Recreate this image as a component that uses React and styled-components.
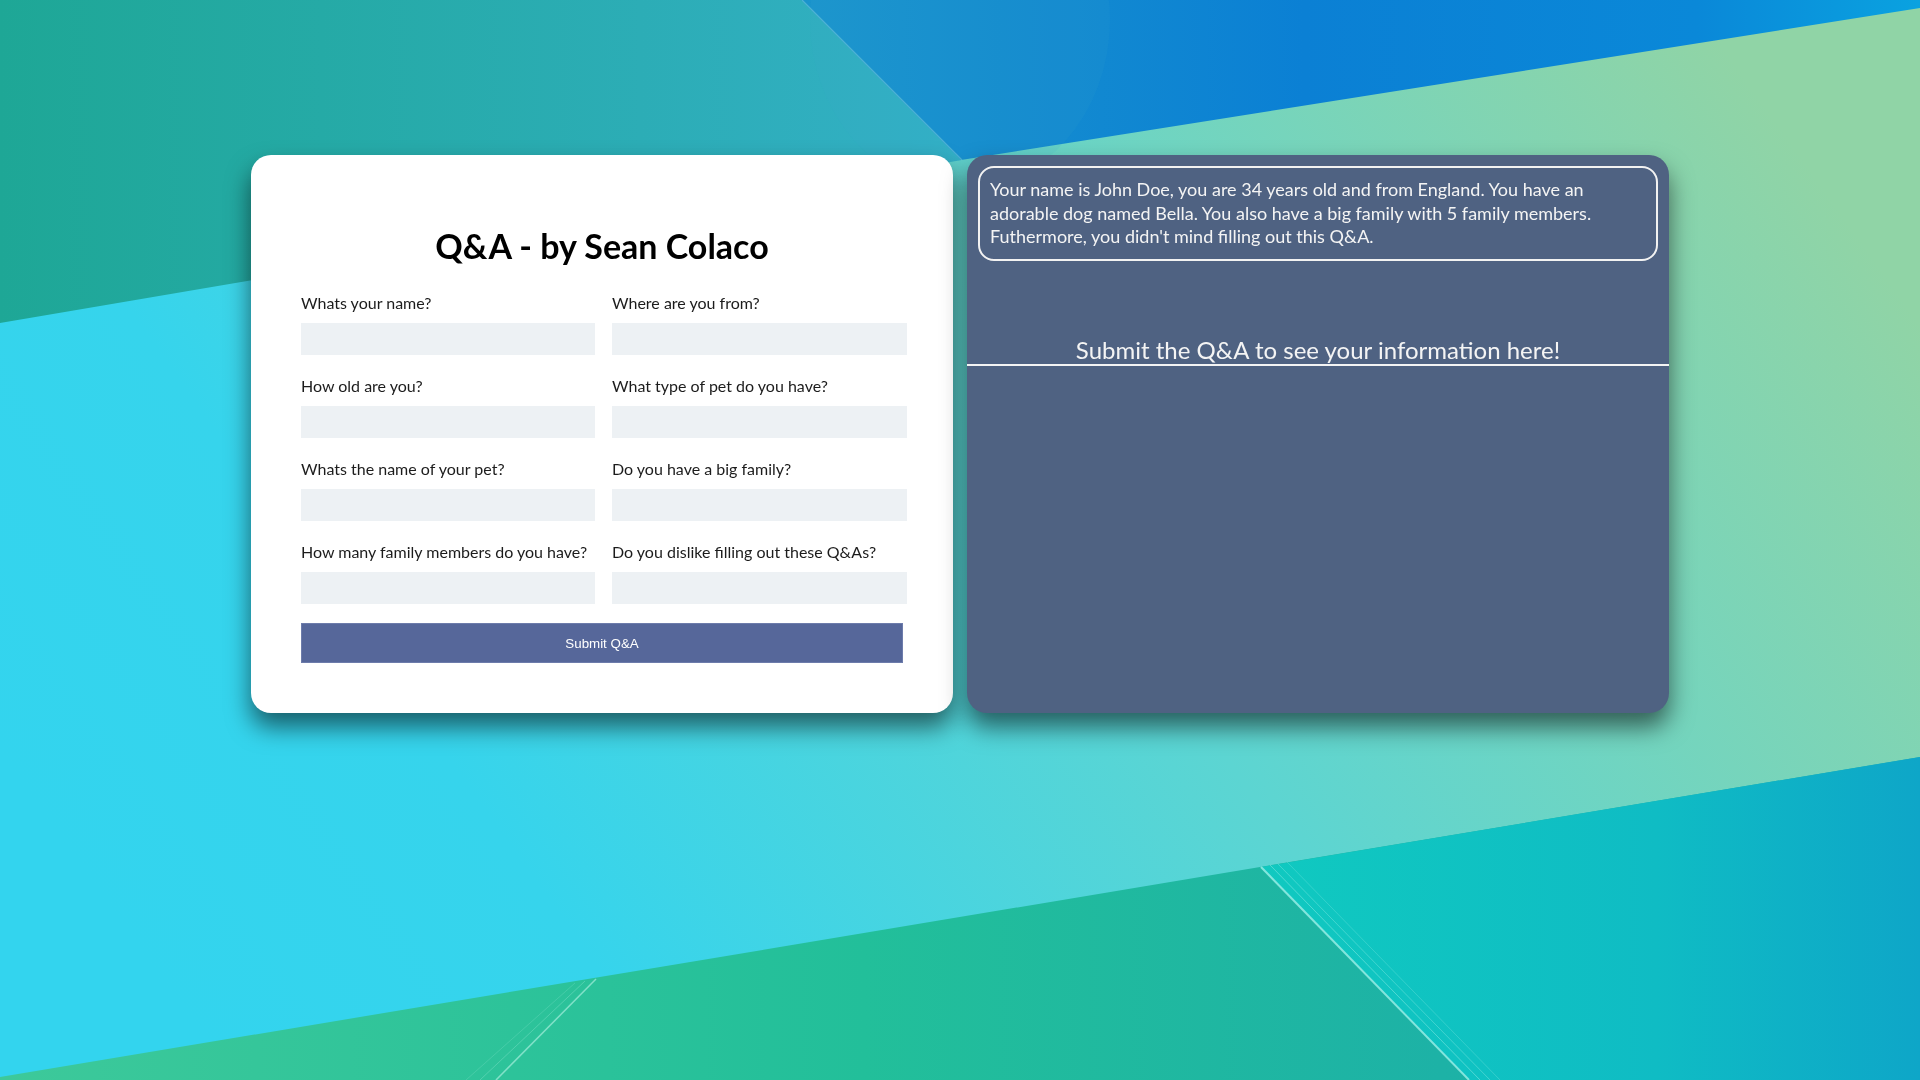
import React from "react";
import styled, { createGlobalStyle } from "styled-components";

const fields = [
  "Whats your name?",
  "Where are you from?",
  "How old are you?",
  "What type of pet do you have?",
  "Whats the name of your pet?",
  "Do you have a big family?",
  "How many family members do you have?",
  "Do you dislike filling out these Q&As?",
];

// wallpaper drawing behind the page
const Wallpaper = () => (
  <Backdrop viewBox="0 0 1920 1080" preserveAspectRatio="none">
    <defs>
      <linearGradient id="tl" x1="0" y1="0" x2="1" y2="0">
        <stop offset="0" stopColor="#1ea796" />
        <stop offset="1" stopColor="#33b0c6" />
      </linearGradient>
      <linearGradient id="tr" x1="0" y1="0" x2="1" y2="0">
        <stop offset="0" stopColor="#1a94cc" />
        <stop offset="0.45" stopColor="#0b80d4" />
        <stop offset="0.8" stopColor="#0a88d8" />
        <stop offset="1" stopColor="#0aa2e0" />
      </linearGradient>
      <linearGradient id="mid" x1="0" y1="0.7" x2="1" y2="0.3">
        <stop offset="0" stopColor="#33d4ee" />
        <stop offset="0.2" stopColor="#36d4ec" />
        <stop offset="0.55" stopColor="#5cd5d2" />
        <stop offset="1" stopColor="#90d4a6" />
      </linearGradient>
      <linearGradient id="bl" x1="0" y1="0" x2="1" y2="0">
        <stop offset="0" stopColor="#3dc99a" />
        <stop offset="0.45" stopColor="#22bf9a" />
        <stop offset="0.75" stopColor="#1db2a6" />
        <stop offset="1" stopColor="#1aaeac" />
      </linearGradient>
      <linearGradient id="br" x1="0" y1="0" x2="1" y2="0">
        <stop offset="0" stopColor="#10c9c0" />
        <stop offset="0.6" stopColor="#0fbcc4" />
        <stop offset="1" stopColor="#0ea6c8" />
      </linearGradient>
    </defs>
    <rect x="0" y="0" width="1920" height="1080" fill="url(#mid)" />
    <polygon points="0,0 802,0 962,160 0,323" fill="url(#tl)" />
    <polygon points="801,0 1920,0 1920,8 961,160" fill="url(#tr)" />
    <ellipse cx="960" cy="20" rx="150" ry="170" fill="#3aa6d2" opacity="0.1" />
    <line x1="802" y1="0" x2="962" y2="160" stroke="#7fd2dc" strokeWidth="1.2" opacity="0.5" />
    <polygon points="0,1077 1920,757 1920,1080 0,1080" fill="url(#bl)" />
    <polygon points="1261,867 1920,757 1920,1080 1469,1080" fill="url(#br)" />
    <line x1="1261" y1="867" x2="1469" y2="1080" stroke="#9ef0e8" strokeWidth="2" opacity="0.8" />
    <line x1="1270" y1="865" x2="1480" y2="1080" stroke="#9ef0e8" strokeWidth="1" opacity="0.45" />
    <line x1="1278" y1="864" x2="1490" y2="1080" stroke="#9ef0e8" strokeWidth="1" opacity="0.35" />
    <line x1="1287" y1="862" x2="1500" y2="1080" stroke="#9ef0e8" strokeWidth="1" opacity="0.25" />
    <line x1="596" y1="979" x2="496" y2="1080" stroke="#a6eedc" strokeWidth="1.5" opacity="0.7" />
    <line x1="585" y1="981" x2="480" y2="1080" stroke="#a6eedc" strokeWidth="1" opacity="0.3" />
    <line x1="575" y1="983" x2="466" y2="1080" stroke="#a6eedc" strokeWidth="1" opacity="0.2" />
  </Backdrop>
);

const App = () => {
  return (
    <>
      <GlobalStyle />
      <Wallpaper />
      <Page>
        <FormCard>
          <Title>Q&amp;A - by Sean Colaco</Title>
          <FieldGrid>
            {fields.map((q) => (
              <Field key={q}>
                <Label>{q}</Label>
                <Input type="text" />
              </Field>
            ))}
          </FieldGrid>
          <SubmitButton>Submit Q&amp;A</SubmitButton>
        </FormCard>

        <ResultCard>
          <Answer>
            Your name is John Doe, you are 34 years old and from England. You
            have an adorable dog named Bella. You also have a big family with 5
            family members. Futhermore, you didn't mind filling out this Q&amp;A.
          </Answer>
          <Hint>Submit the Q&amp;A to see your information here!</Hint>
        </ResultCard>
      </Page>
    </>
  );
};

export default App;

// Styled Components
const GlobalStyle = createGlobalStyle`
  html {
    background: #34d3ec;
  }
  html, body {
    margin: 0;
    padding: 0;
    height: 100%;
    overflow: hidden;
  }
  body {
    font-family: Lato, "Open Sans", sans-serif;
  }
  * {
    box-sizing: border-box;
  }
`;

const Backdrop = styled.svg`
  position: fixed;
  inset: 0;
  width: 100vw;
  height: 100vh;
  z-index: 0;
  display: block;
`;

const Page = styled.main`
  position: relative;
  z-index: 1;
  display: flex;
  justify-content: center;
  align-items: flex-start;
  gap: 14px;
  padding-top: 155px;
`;

const Card = styled.section`
  width: 702px;
  height: 558px;
  border-radius: 20px;
  box-shadow: 0 14px 24px rgba(0, 0, 0, 0.55);
`;

const FormCard = styled(Card)`
  background: #fff;
  padding: 70px 46px 0 50px;
  display: flex;
  flex-direction: column;
`;

const Title = styled.h1`
  margin: 0 0 27px;
  font-size: 34px;
  font-weight: 700;
  line-height: normal;
  color: #000;
  text-align: center;
  padding-right: 4px;
`;

const FieldGrid = styled.div`
  display: grid;
  grid-template-columns: 294px 295px;
  column-gap: 17px;
  row-gap: 21px;
`;

const Field = styled.div`
  display: flex;
  flex-direction: column;
  gap: 11px;
`;

const Label = styled.label`
  font-size: 16px;
  line-height: normal;
  color: #1c1c1c;
  white-space: nowrap;
`;

const Input = styled.input`
  height: 32px;
  width: 100%;
  border: none;
  outline: none;
  background: #edf1f4;
  padding: 0 8px;
  font-family: inherit;
  font-size: 15px;
`;

const SubmitButton = styled.button`
  margin-top: 19px;
  width: 602px;
  height: 40px;
  border: 1px solid #6d7cab;
  background: #56679a;
  color: #fff;
  font-family: "Liberation Sans", Arial, sans-serif;
  font-size: 13.33px;
  cursor: pointer;
`;

const ResultCard = styled(Card)`
  background: #4f6282;
  padding-top: 11px;
  color: #f4f4f4;
`;

const Answer = styled.p`
  margin: 0 11px;
  padding: 10px 10px;
  border: 2px solid #f2f2f2;
  border-radius: 16px;
  font-size: 18px;
  line-height: 23.5px;
`;

const Hint = styled.h2`
  margin: 74px 0 0;
  font-size: 24px;
  font-weight: 400;
  line-height: normal;
  text-align: center;
  border-bottom: 2px solid #f4f4f4;
`;
